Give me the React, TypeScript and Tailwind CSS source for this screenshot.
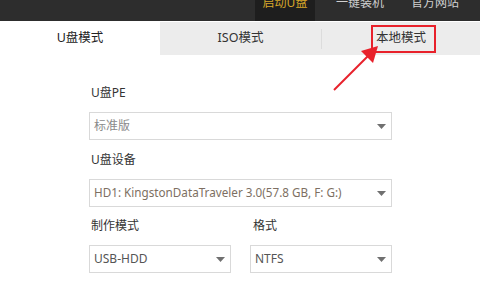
import React from "react";

const font = { fontFamily: '"Noto Sans", "Noto Sans CJK SC", sans-serif' };

function Arrow() {
  return (
    <svg width="9" height="5" viewBox="0 0 9 5" className="shrink-0">
      <path d="M0 0 H9 L4.5 5 Z" fill="#707070" />
    </svg>
  );
}

function Select({
  text,
  color,
  className,
  textClass = "text-[12px]",
}: {
  text: string;
  color: string;
  className: string;
  textClass?: string;
}) {
  return (
    <div
      className={`h-[28px] border border-[#d9d9d9] bg-white flex items-center justify-between pl-[4px] pr-[5px] ${className}`}
    >
      <span className={`${textClass} leading-none whitespace-nowrap`} style={{ color }}>
        {text}
      </span>
      <Arrow />
    </div>
  );
}

export default function App() {
  return (
    <div className="w-[480px] h-[300px] bg-white relative overflow-hidden" style={font}>
      {/* top bar */}
      <div className="h-[21px] bg-[#2d2d2d] flex justify-end pr-[15px] gap-[15px]">
        <div className="w-[60px] h-full bg-[#1e1e1e] flex justify-center items-start">
          <span className="text-[12px] leading-[14px] mt-[-4px] text-[#d7a72a]">启动U盘</span>
        </div>
        <div className="w-[60px] h-full flex justify-center items-start">
          <span className="text-[12px] leading-[14px] mt-[-4px] text-[#d0d0d0]">一键装机</span>
        </div>
        <div className="w-[60px] h-full flex justify-center items-start">
          <span className="text-[12px] leading-[14px] mt-[-4px] text-[#d0d0d0]">官方网站</span>
        </div>
      </div>
      {/* tabs */}
      <div className="flex h-[33px] mt-px">
        <div className="w-[160px] bg-white flex items-center justify-center text-[12.5px] text-[#222]">
          U盘模式
        </div>
        <div className="flex-1 bg-[#ececec] flex items-center">
          <div className="w-[161px] h-full flex items-center justify-center text-[12.5px] text-[#333]">
            ISO模式
          </div>
          <div className="w-px h-[20px] bg-[#dcdcdc]" />
          <div className="flex-1 h-full flex items-center justify-center text-[12.5px] text-[#333]">
            本地模式
          </div>
        </div>
      </div>
      {/* content */}
      <div className="pl-[89px] pt-[30px] flex flex-col">
        <div className="text-[12px] leading-[16px] text-[#333] pl-[2px]">U盘PE</div>
        <Select text="标准版" color="#8a8a8a" className="w-[303px] mt-[11px]" />
        <div className="text-[12px] leading-[16px] text-[#333] pl-[2px] mt-[12px]">U盘设备</div>
        <Select
          text="HD1: KingstonDataTraveler 3.0(57.8 GB, F: G:)"
          color="#7d6f62"
          textClass="text-[11.7px]"
          className="w-[303px] mt-[11px]"
        />
        <div className="flex gap-[19px] mt-[11px]">
          <div className="flex flex-col">
            <div className="text-[12px] leading-[16px] text-[#333] pl-[2px]">制作模式</div>
            <Select text="USB-HDD" color="#555" className="w-[142px] mt-[11px]" />
          </div>
          <div className="flex flex-col">
            <div className="text-[12px] leading-[16px] text-[#333] pl-[3px]">格式</div>
            <Select text="NTFS" color="#555" className="w-[142px] mt-[11px]" />
          </div>
        </div>
      </div>
      {/* annotation */}
      <div className="absolute left-[371px] top-[25px] w-[65px] h-[28px] border-2 border-[#e8212b]" />
      <svg className="absolute left-0 top-0" width="480" height="300" viewBox="0 0 480 300">
        <line x1="334" y1="90" x2="368" y2="56" stroke="#e8212b" strokeWidth="2" />
        <path d="M378 46 L373 63 L361 51 Z" fill="#e8212b" />
      </svg>
    </div>
  );
}
